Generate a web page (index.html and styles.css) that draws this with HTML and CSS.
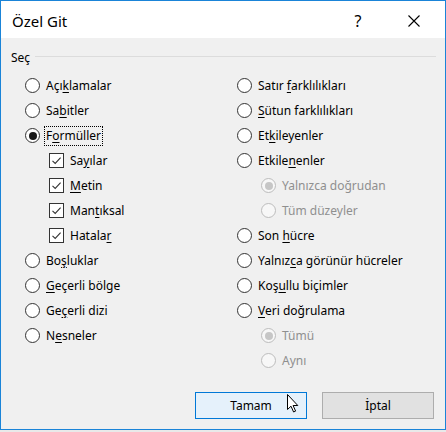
FILE: index.html
```html
<!DOCTYPE html>
<html lang="tr">
<head>
  <meta charset="UTF-8">
  <title>Özel Git</title>
  <link rel="stylesheet" href="styles.css">
</head>
<body>

  <div class="pencere">
    <div class="baslik">
      <span class="baslik-yazi">Özel Git</span>
      <span class="yardim">?</span>
      <span class="kapat">
        <svg width="12" height="12" viewBox="0 0 12 12"><path d="M0.5 0.5 L11.5 11.5 M11.5 0.5 L0.5 11.5" stroke="#000" stroke-width="1.1" fill="none"/></svg>
      </span>
    </div>

    <div class="icerik">
      <div class="grup-baslik">
        <span>Seç</span>
        <div class="cizgi"></div>
      </div>

      <div class="sutunlar">
        <div class="sutun sol">
          <div class="secenek"><span class="radyo"></span><span>Açı<u>k</u>lamalar</span></div>
          <div class="secenek"><span class="radyo"></span><span>Sa<u>b</u>itler</span></div>
          <div class="secenek"><span class="radyo secili"></span><span class="odak">F<u>o</u>rmüller</span></div>
          <div class="secenek alt"><span class="kutu"><svg width="13" height="13" viewBox="0 0 13 13"><path d="M2.5 6.8 L5.2 9.4 L10.6 3.6" stroke="#333" stroke-width="1.1" fill="none"/></svg></span><span>Sa<u>y</u>ılar</span></div>
          <div class="secenek alt"><span class="kutu"><svg width="13" height="13" viewBox="0 0 13 13"><path d="M2.5 6.8 L5.2 9.4 L10.6 3.6" stroke="#333" stroke-width="1.1" fill="none"/></svg></span><span><u>M</u>etin</span></div>
          <div class="secenek alt"><span class="kutu"><svg width="13" height="13" viewBox="0 0 13 13"><path d="M2.5 6.8 L5.2 9.4 L10.6 3.6" stroke="#333" stroke-width="1.1" fill="none"/></svg></span><span>Man<u>t</u>ıksal</span></div>
          <div class="secenek alt"><span class="kutu"><svg width="13" height="13" viewBox="0 0 13 13"><path d="M2.5 6.8 L5.2 9.4 L10.6 3.6" stroke="#333" stroke-width="1.1" fill="none"/></svg></span><span>Hatala<u>r</u></span></div>
          <div class="secenek"><span class="radyo"></span><span>Bo<u>ş</u>luklar</span></div>
          <div class="secenek"><span class="radyo"></span><span><u>G</u>eçerli bölge</span></div>
          <div class="secenek"><span class="radyo"></span><span>Ge<u>ç</u>erli dizi</span></div>
          <div class="secenek"><span class="radyo"></span><span>N<u>e</u>sneler</span></div>
        </div>

        <div class="sutun sag">
          <div class="secenek"><span class="radyo"></span><span>Satır <u>f</u>arklılıkları</span></div>
          <div class="secenek"><span class="radyo"></span><span><u>S</u>ütun farklılıkları</span></div>
          <div class="secenek"><span class="radyo"></span><span>Et<u>k</u>ileyenler</span></div>
          <div class="secenek"><span class="radyo"></span><span>Etkile<u>n</u>enler</span></div>
          <div class="secenek alt pasif"><span class="radyo secili"></span><span>Yalnızca doğrudan</span></div>
          <div class="secenek alt pasif"><span class="radyo"></span><span>Tüm düzeyler</span></div>
          <div class="secenek"><span class="radyo"></span><span>Son <u>h</u>ücre</span></div>
          <div class="secenek"><span class="radyo"></span><span>Yalnız<u>c</u>a görünür hücreler</span></div>
          <div class="secenek"><span class="radyo"></span><span>Koş<u>u</u>llu biçimler</span></div>
          <div class="secenek"><span class="radyo"></span><span><u>V</u>eri doğrulama</span></div>
          <div class="secenek alt pasif"><span class="radyo secili"></span><span>Tümü</span></div>
          <div class="secenek alt pasif"><span class="radyo"></span><span>Aynı</span></div>
        </div>
      </div>

      <div class="dugmeler">
        <button class="dugme varsayilan">Tamam</button>
        <button class="dugme">İptal</button>
      </div>

      <svg class="imlec" width="12" height="19" viewBox="0 0 12 19"><path d="M0.5 0.5 L0.5 15.5 L4 12.2 L6.6 18 L8.6 17.1 L6.1 11.5 L10.8 11.5 Z" fill="#fff" stroke="#000" stroke-width="1"/></svg>
    </div>
  </div>

</body>
</html>
```

FILE: styles.css
```css
body {
  margin: 0;
  background: #e9e9e9;
  font-family: "Noto Sans", sans-serif;
  font-size: 12px;
  color: #000;
}

.pencere {
  width: 446px;
  height: 430px;
  box-sizing: border-box;
  border: 1px solid #1a84d8;
  background: #f0f0f0;
  display: flex;
  flex-direction: column;
}

.baslik {
  height: 37px;
  background: #fff;
  display: flex;
  align-items: center;
  padding: 0 25px 0 11px;
}

.baslik-yazi {
  flex: 1;
  font-size: 15px;
  padding-top: 2px;
}

.yardim {
  width: 16px;
  text-align: center;
  font-size: 16px;
  padding-top: 2px;
}

.kapat {
  margin-left: 42px;
  display: flex;
  padding-top: 2px;
}

.icerik {
  position: relative;
  flex: 1;
}

.grup-baslik {
  display: flex;
  align-items: center;
  height: 18px;
  margin: 10px 9px 0 10px;
}

.grup-baslik span {
  margin-right: 5px;
}

.cizgi {
  flex: 1;
  height: 1px;
  background: #dcdcdc;
  margin-top: -1px;
}

.sutunlar {
  display: flex;
  margin-top: 7px;
}

.sutun.sol {
  width: 236px;
  padding-left: 24px;
  box-sizing: border-box;
}

.secenek {
  height: 25px;
  display: flex;
  align-items: center;
  gap: 6px;
}

.secenek.alt {
  padding-left: 24px;
}

.secenek u {
  text-underline-offset: 2px;
}

.radyo {
  width: 15px;
  height: 15px;
  box-sizing: border-box;
  border: 1px solid #333;
  border-radius: 50%;
  background: #fff;
  display: flex;
  align-items: center;
  justify-content: center;
  flex-shrink: 0;
}

.radyo.secili::after {
  content: "";
  width: 8px;
  height: 8px;
  border-radius: 50%;
  background: #1a1a1a;
}

.kutu {
  width: 15px;
  height: 15px;
  box-sizing: border-box;
  border: 1px solid #333;
  background: #fff;
  display: flex;
  flex-shrink: 0;
}

.pasif {
  color: #8f8f8f;
}

.pasif .radyo {
  border-color: #bcbcbc;
  background: #f7f7f7;
}

.pasif .radyo.secili::after {
  background: #c6c6c6;
}

.odak {
  outline: 1px dotted #000;
  padding: 0 1px;
  margin-left: -1px;
  line-height: 18px;
}

.dugmeler {
  display: flex;
  justify-content: flex-end;
  gap: 15px;
  margin: 19px 11px 0 0;
}

.dugme {
  width: 112px;
  height: 27px;
  font-family: inherit;
  font-size: 12px;
  color: #000;
  background: #e1e1e1;
  border: 1px solid #adadad;
  padding: 0;
}

.dugme.varsayilan {
  background: #e5f1fb;
  border-color: #0078d7;
}

.imlec {
  position: absolute;
  left: 286px;
  top: 356px;
}
```
